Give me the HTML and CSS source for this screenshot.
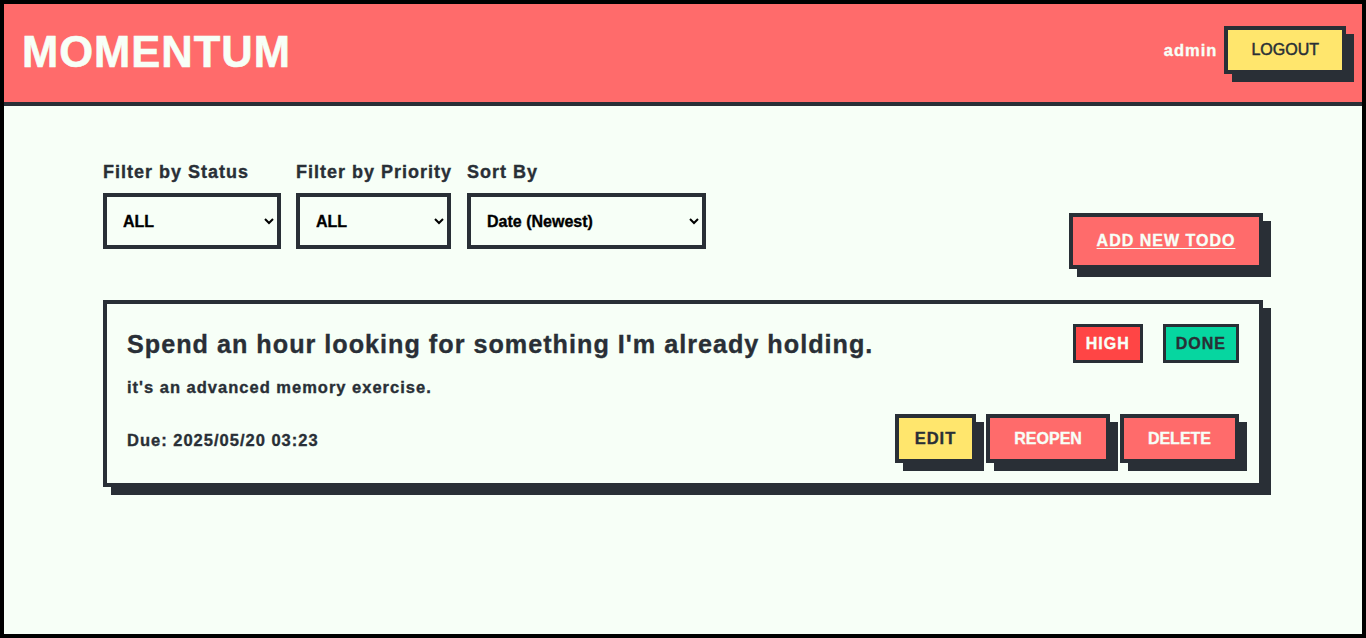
FILE: index.html
```html
<!DOCTYPE html>
<html lang="en">
<head>
<meta charset="utf-8">
<title>Momentum</title>
<link rel="stylesheet" href="styles.css">
</head>
<body>
<div class="frame">
  <header class="topbar">
    <h1 class="brand">MOMENTUM</h1>
    <div class="user">
      <span class="username">admin</span>
      <button class="btn btn-yellow btn-logout">LOGOUT</button>
    </div>
  </header>
  <main class="container">
    <div class="toolbar">
      <div class="filters">
        <div class="field">
          <label class="field-label">Filter by Status</label>
          <select class="sel sel-status">
            <option>ALL</option>
            <option>TODO</option>
            <option>IN PROGRESS</option>
            <option>DONE</option>
          </select>
        </div>
        <div class="field">
          <label class="field-label">Filter by Priority</label>
          <select class="sel sel-priority">
            <option>ALL</option>
            <option>LOW</option>
            <option>MEDIUM</option>
            <option>HIGH</option>
          </select>
        </div>
        <div class="field">
          <label class="field-label">Sort By</label>
          <select class="sel sel-sort">
            <option>Date (Newest)</option>
            <option>Date (Oldest)</option>
            <option>Priority</option>
          </select>
        </div>
      </div>
      <a class="add-btn" href="#">ADD NEW TODO</a>
    </div>

    <article class="card">
      <div class="card-head">
        <h2 class="card-title">Spend an hour looking for something I'm already holding.</h2>
        <div class="badges">
          <span class="badge badge-high">HIGH</span>
          <span class="badge badge-done">DONE</span>
        </div>
      </div>
      <p class="card-desc">it's an advanced memory exercise.</p>
      <div class="card-foot">
        <span class="due">Due: 2025/05/20 03:23</span>
        <div class="actions">
          <a class="btn btn-yellow btn-edit" href="#">EDIT</a>
          <button class="btn btn-coral">REOPEN</button>
          <button class="btn btn-coral">DELETE</button>
        </div>
      </div>
    </article>
  </main>
</div>
</body>
</html>
```

FILE: styles.css
```css
* {
  box-sizing: border-box;
}

html, body {
  margin: 0;
  padding: 0;
}

body {
  background: #000;
  font-family: "Liberation Sans", Arial, sans-serif;
  color: #292f36;
  letter-spacing: 1px;
  -webkit-text-stroke-width: 0.35px;
}

.frame {
  height: 638px;
  border: 4px solid #000;
  background: #f7fff7;
  overflow: hidden;
}

.topbar {
  height: 102px;
  background: #ff6b6b;
  border-bottom: 4px solid #292f36;
  display: flex;
  align-items: center;
  justify-content: space-between;
  padding: 0 16px 0 18px;
}

.brand {
  margin: 0;
  font-size: 43.5px;
  font-weight: bold;
  color: #f7fff7;
  letter-spacing: 1px;
  line-height: 1;
  -webkit-text-stroke-width: 0.6px;
}

.user {
  display: flex;
  align-items: center;
  gap: 7px;
  margin-bottom: 6px;
}

.username {
  color: #f7fff7;
  font-weight: bold;
  font-size: 16.5px;
}

.btn {
  display: inline-flex;
  align-items: center;
  justify-content: center;
  border: 4px solid #292f36;
  box-shadow: 8px 8px 0 #292f36;
  font-family: "Liberation Sans", Arial, sans-serif;
  font-size: 16px;
  font-weight: bold;
  text-decoration: none;
  cursor: pointer;
  letter-spacing: normal;
  -webkit-text-stroke-width: 0.35px;
}

.btn-yellow {
  background: #ffe66d;
  color: #292f36;
}

.btn-coral {
  background: #ff6b6b;
  color: #f7fff7;
  height: 49px;
  padding: 0 24px;
}

.btn-logout {
  height: 48px;
  padding: 0 23px;
  font-weight: normal;
  -webkit-text-stroke-width: 0.5px;
}

.btn-edit {
  height: 49px;
  padding: 0 16px;
  letter-spacing: 1px;
  font-size: 16.5px;
}

.container {
  width: 1160px;
  margin: 0 auto;
  padding-top: 56px;
}

.toolbar {
  display: flex;
  justify-content: space-between;
  align-items: flex-end;
  margin-bottom: 31px;
}

.filters {
  display: flex;
  gap: 15px;
  margin-bottom: 20px;
}

.field {
  display: flex;
  flex-direction: column;
}

.field-label {
  font-size: 18px;
  font-weight: bold;
  line-height: 21px;
  margin-bottom: 10px;
}

.sel {
  height: 56px;
  border: 4px solid #292f36;
  background: #f7fff7;
  color: #000;
  font-family: "Liberation Sans", Arial, sans-serif;
  font-size: 16px;
  font-weight: bold;
  padding: 1px 12px 0;
  border-radius: 0;
  outline: none;
  -webkit-text-stroke-width: 0.35px;
}

.sel-status { width: 178px; }
.sel-priority { width: 155px; }
.sel-sort { width: 239px; }

.add-btn {
  display: inline-flex;
  align-items: center;
  justify-content: center;
  width: 194px;
  height: 56px;
  background: #ff6b6b;
  border: 4px solid #292f36;
  box-shadow: 8px 8px 0 #292f36;
  color: #f7fff7;
  font-weight: bold;
  font-size: 16px;
  text-decoration: underline;
  text-underline-offset: 2px;
}

.card {
  border: 4px solid #292f36;
  box-shadow: 8px 8px 0 #292f36;
  background: #f7fff7;
  padding: 20px;
}

.card-head {
  display: flex;
  justify-content: space-between;
  align-items: center;
}

.card-title {
  margin: 0;
  font-size: 25.2px;
  font-weight: bold;
  line-height: 29px;
  padding-top: 1px;
}

.badges {
  display: flex;
  gap: 20px;
}

.badge {
  display: inline-block;
  height: 39px;
  line-height: 33px;
  padding: 0 10px;
  border: 3px solid #292f36;
  font-size: 16px;
  font-weight: bold;
}

.badge-high {
  background: #ff4545;
  color: #f7fff7;
}

.badge-done {
  background: #06d6a0;
  color: #292f36;
}

.card-desc {
  margin: 15px 0 17px;
  font-size: 16.5px;
  font-weight: bold;
  line-height: 19px;
}

.card-foot {
  display: flex;
  justify-content: space-between;
  align-items: center;
}

.due {
  font-size: 16.5px;
  font-weight: bold;
  margin-top: 3px;
}

.actions {
  display: flex;
  gap: 10px;
}
```
